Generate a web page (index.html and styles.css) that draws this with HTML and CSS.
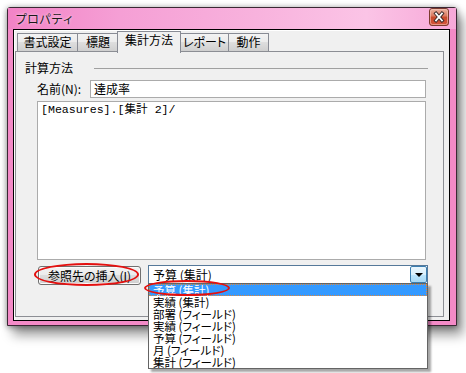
FILE: index.html
```html
<!DOCTYPE html>
<html lang="ja">
<head>
<meta charset="utf-8">
<title>プロパティ</title>
<link rel="stylesheet" href="styles.css">
</head>
<body>
<div class="window">
  <div class="titlebar">
    <span class="title">プロパティ</span>
    <div class="close">
      <svg width="20" height="18" viewBox="0 0 20 18">
        <defs>
          <linearGradient id="cg" x1="0" y1="0" x2="0" y2="1">
            <stop offset="0" stop-color="#eeb7a6"/>
            <stop offset="0.45" stop-color="#d9775d"/>
            <stop offset="0.5" stop-color="#c94a2c"/>
            <stop offset="1" stop-color="#d2553a"/>
          </linearGradient>
        </defs>
        <rect x="0.5" y="0.5" width="19" height="17" rx="2.5" fill="url(#cg)" stroke="#7b3a2e"/>
        <rect x="1.5" y="1.5" width="17" height="15" rx="2" fill="none" stroke="#f3c7b9" stroke-opacity="0.6"/>
        <path d="M7 5.5 L13 12.5 M13 5.5 L7 12.5" stroke="#3a2a2a" stroke-width="3.6" stroke-linecap="square"/>
        <path d="M7 5.5 L13 12.5 M13 5.5 L7 12.5" stroke="#ffffff" stroke-width="1.8" stroke-linecap="square"/>
      </svg>
    </div>
  </div>
  <div class="client">
    <div class="tabs">
      <div class="tab t1">書式設定</div>
      <div class="tab t2">標題</div>
      <div class="tab sel">集計方法</div>
      <div class="tab t4">レポート</div>
      <div class="tab t5">動作</div>
    </div>
    <div class="panel">
      <div class="group-head">
        <span class="group-title">計算方法</span>
        <div class="sep"></div>
      </div>
      <div class="name-row">
        <span class="label">名前(N):</span>
        <div class="input">達成率</div>
      </div>
      <div class="textarea">[Measures].[集計 2]/</div>
      <div class="bottom-row">
        <div class="btn">参照先の挿入(I)<span class="ellipse e1"></span></div>
        <div class="combo">
          <span class="combo-text">予算 (集計)</span>
          <div class="drop-btn"><span class="arrow"></span></div>
          <ul class="list">
            <li class="item selected">予算 (集計)</li>
            <li class="item">実績 (集計)</li>
            <li class="item">部署 (フィールド)</li>
            <li class="item">実績 (フィールド)</li>
            <li class="item">予算 (フィールド)</li>
            <li class="item">月 (フィールド)</li>
            <li class="item">集計 (フィールド)</li>
          </ul>
          <span class="ellipse e2"></span>
        </div>
      </div>
    </div>
  </div>
</div>
</body>
</html>
```

FILE: styles.css
```css
html, body {
  margin: 0;
  padding: 0;
}
body {
  width: 466px;
  height: 373px;
  overflow: hidden;
  background: #ffffff;
  font-family: "Noto Sans CJK JP", "Noto Sans", sans-serif;
  font-size: 12px;
  font-feature-settings: "palt";
  color: #000;
}
.window {
  margin: 7px 0 0 7px;
  width: 450px;
  height: 319px;
  box-sizing: border-box;
  border: 1px solid #3b2834;
  border-radius: 3px 3px 0 0;
  background: #f38ac7;
  padding: 0 6px 4px 5px;
  display: flex;
  flex-direction: column;
  box-shadow: 0 1px 6px rgba(0,0,0,0.45), 6px 9px 12px rgba(0,0,0,0.4);
}
.titlebar {
  height: 21px;
  margin: 0 -6px 0 -5px;
  padding: 0 7px 0 7px;
  display: flex;
  align-items: center;
  justify-content: space-between;
  background: linear-gradient(to right, #f283c6 0%, #f59fd5 25%, #f8b2dd 55%, #fbc4e6 80%, #f7a8d8 100%);
}
.title {
  font-size: 12px;
  line-height: 14px;
  color: #1a1a1a;
  margin-top: 1px;
  font-feature-settings: normal;
  text-shadow: 0 0 3px rgba(255,255,255,0.8);
}
.close {
  align-self: flex-start;
  width: 20px;
  height: 18px;
  display: flex;
}
.client {
  flex: 1;
  border: 1px solid #000;
  background: #f0f0f0;
  box-shadow: inset 1px 1px 0 #ffffff;
  padding: 1px 5px 3px 1px;
  display: flex;
  flex-direction: column;
}
.tabs {
  height: 20px;
  display: flex;
  align-items: flex-end;
  padding-left: 2px;
}
.tab {
  box-sizing: border-box;
  height: 18px;
  border: 1px solid #898c95;
  border-bottom: none;
  background: linear-gradient(#f3f3f3 0%, #ebebeb 50%, #dedede 50%, #cfcfcf 100%);
  text-align: center;
  line-height: 16px;
  font-size: 12px;
  white-space: nowrap;
}
.t1 { width: 61px; }
.t2 { width: 42px; margin-left: -1px; }
.sel {
  width: 64px;
  height: 22px;
  margin-left: -2px;
  margin-bottom: -2px;
  background: #f0f0f0;
  line-height: 16px;
  position: relative;
  z-index: 2;
}
.t4 { width: 49px; margin-left: -1px; }
.t5 { width: 41px; margin-left: -1px; }
.panel {
  flex: 1;
  border: 1px solid #8c8e94;
  background: #f0f0f0;
  display: flex;
  flex-direction: column;
}
.group-head {
  margin-top: 10px;
  height: 12px;
  display: flex;
  align-items: center;
  padding-left: 9px;
}
.group-title {
  line-height: 12px;
  white-space: nowrap;
}
.sep {
  flex: 1;
  height: 1px;
  background: #a0a0a0;
  margin-left: 21px;
  margin-right: 15px;
  margin-top: 1px;
}
.name-row {
  margin-top: 6px;
  height: 18px;
  display: flex;
  align-items: center;
  padding-left: 21px;
}
.label {
  width: 53px;
  line-height: 14px;
  white-space: nowrap;
}
.input {
  box-sizing: border-box;
  width: 336px;
  height: 18px;
  border: 1px solid #ababab;
  background: #fff;
  padding-left: 3px;
  line-height: 16px;
}
.textarea {
  box-sizing: border-box;
  margin: 3px 0 0 21px;
  width: 389px;
  height: 159px;
  border: 1px solid #ababab;
  background: #fff;
  padding: 1px 3px;
  font-family: "Liberation Mono", "Noto Sans CJK JP", monospace;
  font-size: 11.6px;
  line-height: 14px;
  font-feature-settings: normal;
}
.bottom-row {
  margin-top: 5px;
  display: flex;
  align-items: flex-start;
  padding-left: 22px;
}
.btn {
  position: relative;
  box-sizing: border-box;
  margin-top: 1px;
  width: 103px;
  height: 19px;
  border: 1px solid #707070;
  border-radius: 3px;
  background: linear-gradient(#f2f2f2 0%, #ebebeb 50%, #dddddd 50%, #cfcfcf 100%);
  box-shadow: inset 0 0 0 1px #fbfbfb;
  text-align: center;
  line-height: 17px;
  white-space: nowrap;
}
.ellipse {
  position: absolute;
  box-sizing: border-box;
  border: 2px solid #e4100f;
  border-radius: 50%;
  z-index: 5;
  pointer-events: none;
}
.e1 {
  left: -5px;
  top: -4px;
  width: 105px;
  height: 23px;
}
.combo {
  position: relative;
  box-sizing: border-box;
  margin-left: 7px;
  width: 280px;
  height: 19px;
  border: 1px solid #56799a;
  background: #fff;
  display: flex;
  align-items: center;
}
.combo-text {
  flex: 1;
  padding-left: 4px;
  line-height: 16px;
  white-space: nowrap;
}
.drop-btn {
  box-sizing: border-box;
  width: 17px;
  height: 17px;
  border: 1px solid #3c7fb1;
  border-radius: 2px;
  background: linear-gradient(#eaf6fd 0%, #d9f0fc 50%, #bee6fd 50%, #a7d9f5 100%);
  display: flex;
  align-items: center;
  justify-content: center;
}
.arrow {
  width: 0;
  height: 0;
  border-left: 4px solid transparent;
  border-right: 4px solid transparent;
  border-top: 4px solid #000;
  margin-top: 1px;
}
.list {
  position: absolute;
  left: -1px;
  top: 17px;
  width: 280px;
  box-sizing: border-box;
  margin: 0;
  padding: 0;
  list-style: none;
  border: 1px solid #646464;
  background: #fff;
  box-shadow: 3px 3px 2px rgba(0,0,0,0.35);
  z-index: 4;
}
.item {
  height: 12px;
  line-height: 12px;
  font-size: 11.5px;
  padding-left: 4px;
  white-space: nowrap;
}
.item.selected {
  background: #3399ff;
  color: #fff;
  outline: 1px dotted #e0873a;
  outline-offset: -1px;
}
.e2 {
  left: -5px;
  top: 14px;
  width: 86px;
  height: 16px;
}
```
